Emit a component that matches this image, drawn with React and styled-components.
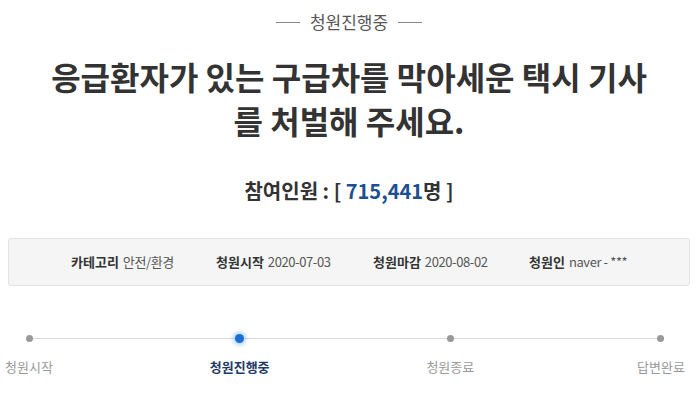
import styled, { createGlobalStyle } from 'styled-components';

const GlobalStyle = createGlobalStyle`
  html, body {
    margin: 0;
    padding: 0;
    background: #fff;
  }
  body {
    font-family: "Noto Sans CJK KR", "Noto Sans", sans-serif;
    color: #333;
  }
`;

const Page = styled.div`
  width: 700px;
  height: 406px;
  box-sizing: border-box;
  padding: 11px 10px 0 8px;
  overflow: hidden;
`;

const StatusHeader = styled.div`
  display: flex;
  align-items: center;
  justify-content: center;
  gap: 10px;
  font-size: 17px;
  line-height: 22px;
  color: #555;

  &::before,
  &::after {
    content: '';
    width: 24px;
    height: 1px;
    background: #888;
  }
`;

const Title = styled.h1`
  margin: 21px auto 0;
  width: 612px;
  font-size: 32px;
  line-height: 44px;
  font-weight: 700;
  text-align: center;
  color: #333;
`;

const Count = styled.div`
  margin-top: 35px;
  text-align: center;
  font-size: 20px;
  line-height: 28px;
  font-weight: 700;
  color: #333;
`;

const CountNumber = styled.span`
  color: #1d4f91;
`;

const InfoBox = styled.div`
  margin-top: 33px;
  height: 48px;
  box-sizing: border-box;
  display: flex;
  align-items: center;
  padding-left: 62px;
  background: #f5f5f5;
  border: 1px solid #e3e3e3;
  border-radius: 3px;
`;

const InfoItem = styled.div`
  display: flex;
  align-items: baseline;
  gap: 4px;
  width: ${props => props.$width}px;
  font-size: 13px;
  line-height: 18px;
`;

const InfoLabel = styled.span`
  font-weight: 700;
  color: #333;
`;

const InfoValue = styled.span`
  color: #555;
  letter-spacing: -0.4px;
`;

const Progress = styled.div`
  position: relative;
  margin: 47px 0 0 -8px;
  display: flex;
  justify-content: space-between;
  width: 690px;
`;

const Track = styled.div`
  position: absolute;
  left: 29px;
  right: 29px;
  top: 5px;
  height: 1px;
  background: #d8d8d8;
`;

const Step = styled.div`
  position: relative;
  width: 58px;
  display: flex;
  flex-direction: column;
  align-items: center;
  gap: 16px;
`;

const Dot = styled.span`
  width: ${props => (props.$active ? 9 : 7)}px;
  height: ${props => (props.$active ? 9 : 7)}px;
  margin-top: ${props => (props.$active ? 1 : 2)}px;
  margin-bottom: ${props => (props.$active ? 0 : 1)}px;
  border-radius: 50%;
  background: ${props => (props.$active ? '#1a6fd6' : '#999')};
  box-shadow: ${props => (props.$active ? '0 0 4px 2px rgba(70, 150, 240, 0.45)' : 'none')};
`;

const StepLabel = styled.span`
  font-size: 13px;
  line-height: 16px;
  white-space: nowrap;
  font-weight: ${props => (props.$active ? 700 : 400)};
  color: ${props => (props.$active ? '#1f3b68' : '#999')};
`;

const infoItems = [
  { label: '카테고리', value: '안전/환경', width: 145 },
  { label: '청원시작', value: '2020-07-03', width: 157 },
  { label: '청원마감', value: '2020-08-02', width: 156 },
  { label: '청원인', value: 'naver - ***', width: 120 },
];

const steps = [
  { label: '청원시작' },
  { label: '청원진행중', active: true },
  { label: '청원종료' },
  { label: '답변완료' },
];

export default function App() {
  return (
    <>
      <GlobalStyle />
      <Page>
        <StatusHeader>청원진행중</StatusHeader>
        <Title>응급환자가 있는 구급차를 막아세운 택시 기사를 처벌해 주세요.</Title>
        <Count>
          참여인원 : [ <CountNumber>715,441</CountNumber>명 ]
        </Count>
        <InfoBox>
          {infoItems.map(item => (
            <InfoItem key={item.label} $width={item.width}>
              <InfoLabel>{item.label}</InfoLabel>
              <InfoValue>{item.value}</InfoValue>
            </InfoItem>
          ))}
        </InfoBox>
        <Progress>
          <Track />
          {steps.map(step => (
            <Step key={step.label}>
              <Dot $active={step.active} />
              <StepLabel $active={step.active}>{step.label}</StepLabel>
            </Step>
          ))}
        </Progress>
      </Page>
    </>
  );
}
